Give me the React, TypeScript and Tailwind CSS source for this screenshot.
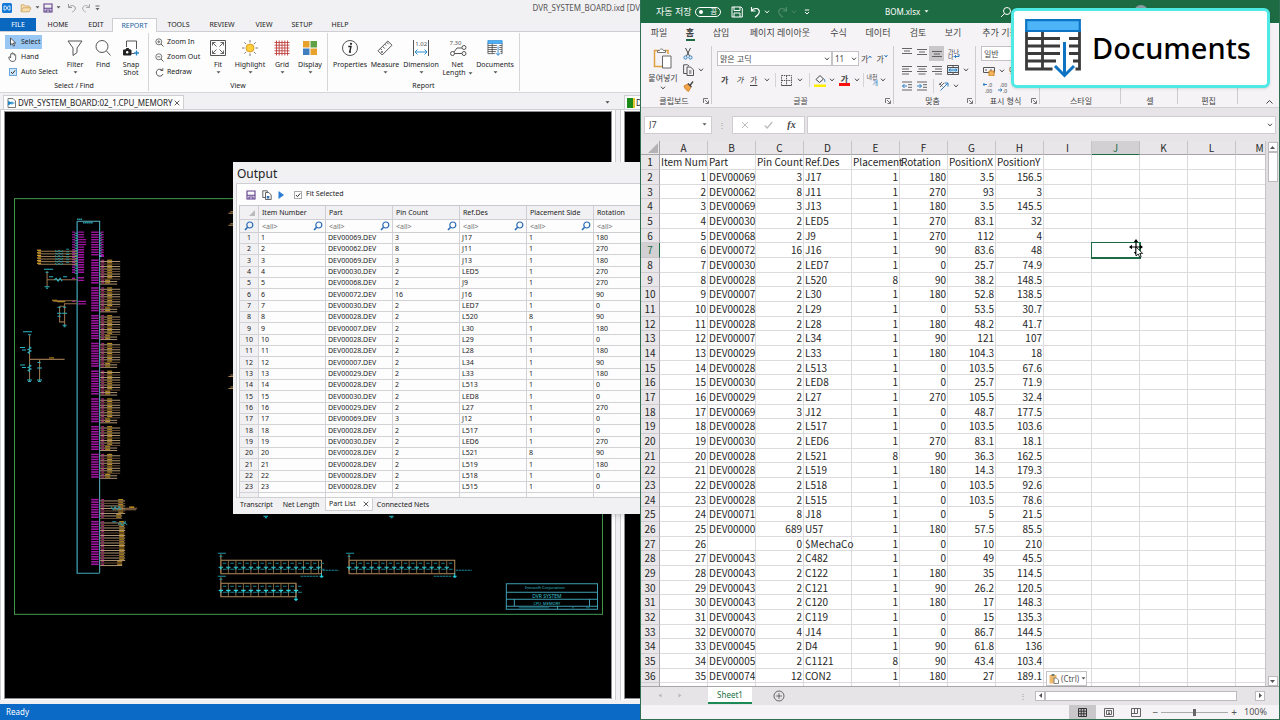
import type { ReactNode } from "react";

type Part = [string, string, string, string, string, string, string];

// part, pin count, ref.des, placement side, rotation, x, y
const PARTS: Part[] = [
  ["DEV00069", "3", "J17", "1", "180", "3.5", "156.5"],
  ["DEV00062", "8", "J11", "1", "270", "93", "3"],
  ["DEV00069", "3", "J13", "1", "180", "3.5", "145.5"],
  ["DEV00030", "2", "LED5", "1", "270", "83.1", "32"],
  ["DEV00068", "2", "J9", "1", "270", "112", "4"],
  ["DEV00072", "16", "J16", "1", "90", "83.6", "48"],
  ["DEV00030", "2", "LED7", "1", "0", "25.7", "74.9"],
  ["DEV00028", "2", "L520", "8", "90", "38.2", "148.5"],
  ["DEV00007", "2", "L30", "1", "180", "52.8", "138.5"],
  ["DEV00028", "2", "L29", "1", "0", "53.5", "30.7"],
  ["DEV00028", "2", "L28", "1", "180", "48.2", "41.7"],
  ["DEV00007", "2", "L34", "1", "90", "121", "107"],
  ["DEV00029", "2", "L33", "1", "180", "104.3", "18"],
  ["DEV00028", "2", "L513", "1", "0", "103.5", "67.6"],
  ["DEV00030", "2", "LED8", "1", "0", "25.7", "71.9"],
  ["DEV00029", "2", "L27", "1", "270", "105.5", "32.4"],
  ["DEV00069", "3", "J12", "1", "0", "48.7", "177.5"],
  ["DEV00028", "2", "L517", "1", "0", "103.5", "103.6"],
  ["DEV00030", "2", "LED6", "1", "270", "83.1", "18.1"],
  ["DEV00028", "2", "L521", "8", "90", "36.3", "162.5"],
  ["DEV00028", "2", "L519", "1", "180", "14.3", "179.3"],
  ["DEV00028", "2", "L518", "1", "0", "103.5", "92.6"],
  ["DEV00028", "2", "L515", "1", "0", "103.5", "78.6"],
  ["DEV00071", "8", "J18", "1", "0", "5", "21.5"],
  ["DEV00000", "689", "U57", "1", "180", "57.5", "85.5"],
  ["", "0", "$MechaCo", "1", "0", "10", "210"],
  ["DEV00043", "2", "C482", "1", "0", "49", "45.5"],
  ["DEV00043", "2", "C122", "1", "180", "35", "114.5"],
  ["DEV00043", "2", "C121", "1", "90", "26.2", "120.5"],
  ["DEV00043", "2", "C120", "1", "180", "17", "148.3"],
  ["DEV00043", "2", "C119", "1", "0", "15", "135.3"],
  ["DEV00070", "4", "J14", "1", "0", "86.7", "144.5"],
  ["DEV00045", "2", "D4", "1", "90", "61.8", "136"],
  ["DEV00005", "2", "C1121", "8", "90", "43.4", "103.4"],
  ["DEV00074", "12", "CON2", "1", "180", "27", "189.1"],
];

const SHEET_HEADERS = ["Item Num", "Part", "Pin Count", "Ref.Des", "Placement", "Rotation", "PositionX", "PositionY"];
const COLUMNS = ["A", "B", "C", "D", "E", "F", "G", "H", "I", "J", "K", "L", "M"];
const OUTPUT_COLUMNS = ["Item Number", "Part", "Pin Count", "Ref.Des", "Placement Side", "Rotation"];

/* ---------- shared bits ---------- */

function Icon({ box, className, children }: { box: string; className: string; children: ReactNode }) {
  return (
    <svg viewBox={box} className={`shrink-0 ${className}`} fill="none" stroke="currentColor" aria-hidden="true">
      {children}
    </svg>
  );
}

function Caret({ className = "text-[#555]" }: { className?: string }) {
  return (
    <Icon box="0 0 5 3" className={`h-[3px] w-[5px] ${className}`}>
      <path d="M0.5 0.3h4L2.5 2.6z" fill="currentColor" stroke="none" />
    </Icon>
  );
}

function Chevron({ className = "text-[#444]" }: { className?: string }) {
  return (
    <Icon box="0 0 6 4" className={`h-1 w-1.5 ${className}`}>
      <path d="M1 0.7l2 2.2 2-2.2" />
    </Icon>
  );
}

function Launcher() {
  return (
    <Icon box="0 0 6 6" className="size-1.5 text-[#555]">
      <path d="M0.5 5V0.5H5M2 2l3 3M5.5 2.5v3h-3" strokeWidth="0.8" />
    </Icon>
  );
}

function Tick({ id, label, blue }: { id: string; label: string; blue?: boolean }) {
  return (
    <label htmlFor={id} className="flex items-center gap-1 whitespace-nowrap">
      <span className="grid size-2 place-items-center">
        <input
          id={id}
          type="checkbox"
          defaultChecked
          className={`col-start-1 row-start-1 size-2 appearance-none border ${blue ? "border-[#6aa7dd] bg-[#cfe5fa]" : "border-[#aaa] bg-white"}`}
        />
        <Icon box="0 0 8 8" className="pointer-events-none col-start-1 row-start-1 size-2 text-[#333]">
          <path d="M2 4l1.5 1.7L6.2 2.4" />
        </Icon>
      </span>
      {label}
    </label>
  );
}

/* ---------- board viewer ---------- */

const saveIcon = (
  <Icon box="0 0 10 10" className="size-2.5 text-[#5d3c87]">
    <path d="M1 1h8v8H1zM1 5.2h8M3 9V7h4v2" strokeWidth="1.1" />
  </Icon>
);

function QuickAccess() {
  return (
    <header className="flex h-[15px] items-center pl-0.5">
      <Icon box="0 0 10 10" className="mr-2 size-2.5">
        <rect width="10" height="10" rx="1.5" fill="#1479d8" stroke="none" />
        <path d="M2 3v4h1.5L5 5l1.5 2H8V3H6.5L5 5 3.5 3z" stroke="#fff" strokeWidth="0.8" />
      </Icon>
      <button aria-label="Open" className="mr-[3px]">
        <Icon box="0 0 12 10" className="h-2.5 w-3">
          <path d="M1.2 8.8V1.8h3l1 1.2h4v2M1.2 8.8l1.8-4h8l-1.8 4z" stroke="#d2a869" fill="#f8dfae" strokeWidth="0.9" />
        </Icon>
      </button>
      <Caret />
      <button aria-label="Save" className="mx-[3px]">{saveIcon}</button>
      <Caret />
      <button aria-label="Undo" className="ml-1.5">
        <Icon box="0 0 10 10" className="size-2.5 text-[#999]">
          <path d="M1.5 1v3.5H5M1.7 4.3C3.3 2 7.8 1.8 8.3 5c.2 2-1.3 3.3-3 4" />
        </Icon>
      </button>
      <button aria-label="Redo" className="mx-1">
        <Icon box="0 0 10 10" className="size-2.5 text-[#aaa]">
          <path d="M8.5 1v3.5H5M8.3 4.3C6.7 2 2.2 1.8 1.7 5c-.2 2 1.3 3.3 3 4" />
        </Icon>
      </button>
      <Icon box="0 0 5 6" className="h-1.5 w-[5px] text-[#666]">
        <path d="M0.5 1h4" />
        <path d="M0.5 3h4L2.5 5.4z" fill="currentColor" stroke="none" />
      </Icon>
      <h1 className="flex-1 text-right text-[8px] leading-[15px] whitespace-nowrap text-[#555]">
        DVR_SYSTEM_BOARD.ixd [DV
      </h1>
    </header>
  );
}

function MenuTabs() {
  return (
    <nav className="flex h-3.5 items-stretch border-b border-[#cfced2] text-[7px] leading-3 text-[#222]">
      <button className="w-9 bg-[#0a67bf] text-white">FILE</button>
      <button className="w-11">HOME</button>
      <button className="w-8">EDIT</button>
      <button className="-mb-px w-[45px] border border-b-0 border-[#cfced2] bg-[#fdfdfe] text-[#1c5f9e]">REPORT</button>
      <button className="w-[43px]">TOOLS</button>
      <button className="w-11">REVIEW</button>
      <button className="w-10">VIEW</button>
      <button className="w-9">SETUP</button>
      <button className="w-10">HELP</button>
    </nav>
  );
}

function BigButton({ icon, label, width, caret, tail }: { icon: ReactNode; label: string; width: string; caret?: boolean; tail?: string }) {
  return (
    <button className={`flex flex-col items-center ${width}`}>
      <span className="flex h-[25px] items-center">{icon}</span>
      <span className="leading-[9px] whitespace-nowrap">{label}</span>
      {tail && (
        <span className="flex items-center gap-0.5 leading-[8px]">
          {tail}
          {caret && <Caret />}
        </span>
      )}
      {!tail && caret && <span className="pt-0.5"><Caret /></span>}
    </button>
  );
}

function BoardGroup({ label, width, children }: { label: string; width: string; children: ReactNode }) {
  return (
    <section className={`my-px flex flex-col border-r border-[#d5d4d8] ${width}`}>
      <div className="flex h-[47px] items-start pt-0.5">{children}</div>
      <h2 className="text-center leading-[11px]">{label}</h2>
    </section>
  );
}

const big = "size-[18px] text-[#555]";

function BoardRibbon() {
  return (
    <div className="flex h-[61px] border-b border-[#d5d4d8] bg-[#fdfdfe] text-[7px] text-[#222]">
      <BoardGroup label="Select / Find" width="w-[149px]">
        <div className="flex w-[61px] flex-col gap-px pl-[5px]">
          <button className="flex h-3.5 w-[37px] items-center gap-1 bg-[#99c7f3] pl-1">
            <Icon box="0 0 8 10" className="h-2.5 w-2 text-[#333]">
              <path d="M1.5 1v7l1.7-1.6 1.3 2.8 1.1-.5-1.2-2.7h2.3z" fill="#fff" strokeWidth="0.8" />
            </Icon>
            Select
          </button>
          <button className="flex h-3.5 items-center gap-1 pl-[3px]">
            <Icon box="0 0 9 10" className="h-2.5 w-[9px] text-[#444]">
              <path d="M2.6 6V2.3c0-1 1.3-1 1.3 0V1.5c0-1 1.3-1 1.3 0v.8c0-1 1.3-1 1.3 0v1c0-.9 1.2-.9 1.2 0V7c0 3-5 3.2-6.2.8L.8 5.6c-.4-.9.7-1.2 1.1-.5z" strokeWidth="0.8" />
            </Icon>
            Hand
          </button>
          <div className="flex h-3.5 items-center pl-1">
            <Tick id="auto-select" label="Auto Select" blue />
          </div>
        </div>
        <BigButton width="w-7" label="Filter" caret icon={<Icon box="0 0 18 18" className={big}><path d="M2 2h14l-5 7v4.5l-4 3V9z" /></Icon>} />
        <BigButton width="w-7" label="Find" icon={<Icon box="0 0 18 18" className={big}><circle cx="8" cy="7.5" r="6" /><path d="M12.5 12l4 4.5" /></Icon>} />
        <BigButton
          width="w-7"
          label="Snap"
          tail="Shot"
          icon={
            <Icon box="0 0 18 18" className={big}>
              <path d="M4.5 8V2h10v8M9.5 14.5h3" />
              <path d="M1.5 11h2l1-1.5h2L7.5 11H9v5H1.5z" fill="#222" stroke="#222" />
              <circle cx="5.2" cy="13.3" r="1.2" fill="#fff" stroke="none" />
              <path d="M14.5 11.5v5M12 14h5" stroke="#2587c8" strokeWidth="1.3" />
            </Icon>
          }
        />
      </BoardGroup>
      <BoardGroup label="View" width="w-[179px]">
        <div className="flex w-[55px] flex-col gap-px pl-1.5">
          {["Zoom In", "Zoom Out", "Redraw"].map((label, i) => (
            <button key={label} className="flex h-3.5 items-center gap-[3px] whitespace-nowrap">
              <Icon box="0 0 9 9" className="size-[9px] text-[#555]">
                {i < 2 ? <path d="M6 6l2.5 2.5" /> : <path d="M7.5 2.5A3.5 3.5 0 1 0 8 6M5.5 2.5h2.3V.3" />}
                {i < 2 && <circle cx="3.8" cy="3.8" r="3" strokeWidth="0.8" />}
                {i < 2 && <path d={i === 0 ? "M2.3 3.8h3M3.8 2.3v3" : "M2.3 3.8h3"} strokeWidth="0.8" />}
              </Icon>
              {label}
            </button>
          ))}
        </div>
        <BigButton
          width="w-7"
          label="Fit"
          caret
          icon={
            <Icon box="0 0 18 18" className={big}>
              <path d="M1.5 1.5h15v15h-15z" />
              <path d="M7.5 7.5l-4-4M3.5 6.5v-3h3M10.5 7.5l4-4M11.5 3.5h3v3M7.5 10.5l-4 4M3.5 11.5v3h3M10.5 10.5l4 4M14.5 11.5v3h-3" strokeWidth="0.9" />
            </Icon>
          }
        />
        <BigButton
          width="w-9"
          label="Highlight"
          caret
          icon={
            <Icon box="0 0 18 18" className={big}>
              <path d="M9 1v2.5M9 14.5V17M1 9h2.5M14.5 9H17M3.3 3.3l1.8 1.8M12.9 12.9l1.8 1.8M14.7 3.3l-1.8 1.8M5.1 12.9l-1.8 1.8" stroke="#777" />
              <circle cx="9" cy="9" r="4" fill="#ffcf3d" stroke="#dfa025" />
            </Icon>
          }
        />
        <BigButton
          width="w-7"
          label="Grid"
          caret
          icon={
            <Icon box="0 0 18 18" className={big}>
              <path d="M3.5 1.5v15M6.2 1.5v15M9 1.5v15M11.8 1.5v15M14.5 1.5v15M1.5 3.5h15M1.5 6.2h15M1.5 9h15M1.5 11.8h15M1.5 14.5h15" stroke="#c0433f" strokeWidth="0.9" />
            </Icon>
          }
        />
        <BigButton
          width="w-7"
          label="Display"
          caret
          icon={
            <Icon box="0 0 18 18" className={big}>
              <g stroke="none">
                <path d="M2 2h6.5v6.5H2z" fill="#e8a22c" />
                <path d="M9.5 2H16v6.5H9.5z" fill="#5fa144" />
                <path d="M2 9.5h6.5V16H2z" fill="#3f7fbf" />
                <path d="M9.5 9.5H16V16H9.5z" fill="#e8a22c" />
              </g>
            </Icon>
          }
        />
      </BoardGroup>
      <BoardGroup label="Report" width="w-[192px]">
        <span className="w-0.5" />
        <BigButton
          width="w-10"
          label="Properties"
          icon={
            <Icon box="0 0 18 18" className={big}>
              <circle cx="9" cy="9" r="7.5" />
              <path d="M8 7.5h2L8.7 13H10M7.3 7.5h1" stroke="#222" strokeWidth="1.4" />
              <circle cx="10" cy="4.8" r="1.1" fill="#222" stroke="none" />
            </Icon>
          }
        />
        <BigButton
          width="w-[30px]"
          label="Measure"
          caret
          icon={
            <Icon box="0 0 18 18" className={big}>
              <path d="M2 11.8L11.8 2 16 6.2 6.2 16zM4.3 9.5l1.5 1.5M6.5 7.3l2.2 2.2M8.7 5.1l1.5 1.5M10.6 3.2l2 2" />
              <circle cx="6" cy="13" r="0.6" />
            </Icon>
          }
        />
        <BigButton
          width="w-[42px]"
          label="Dimension"
          caret
          icon={
            <Icon box="0 0 18 18" className={big}>
              <path d="M1.5 1v16M16.5 1v16" />
              <path d="M3 13h12M5.5 10.5L3 13l2.5 2.5M12.5 10.5L15 13l-2.5 2.5" stroke="#2d8fcb" />
              <text x="3.3" y="6.5" fontSize="6" fill="currentColor" stroke="none">1.02</text>
            </Icon>
          }
        />
        <BigButton
          width="w-[31px]"
          label="Net"
          tail="Length"
          caret
          icon={
            <Icon box="0 0 18 18" className={big}>
              <text x="0.5" y="6" fontSize="6" fill="currentColor" stroke="none">7.30</text>
              <circle cx="15" cy="8.5" r="2" />
              <circle cx="3.5" cy="14.5" r="2" />
              <circle cx="15" cy="14.5" r="2" />
              <path d="M5.5 14.5H13M5 13l3-4h5" />
            </Icon>
          }
        />
        <BigButton width="w-11" label="Documents" caret icon={<DocumentsIcon className="size-4" />} />
      </BoardGroup>
    </div>
  );
}

function DocumentsIcon({ className }: { className: string }) {
  return (
    <Icon box="0 0 58 60" className={className}>
      <path d="M2.5 12v39h26M55.5 12v39h-4M3 20.5h33M45 20.5h10M3 28h33M45 28h10M3 35.5h33M45 35.5h10M3 43h29M49 43h6M18.5 12v39" stroke="#3b3b3b" strokeWidth="2.8" />
      <path d="M2.2 2.2h53.6V13H2.2z" fill="#4db4f8" stroke="#0d74c4" strokeWidth="2.2" />
      <path d="M40.5 24v33M31 48l9.5 9.5L50 48" stroke="#0d74c4" strokeWidth="3" />
    </Icon>
  );
}

function DocTabs() {
  return (
    <div className="flex h-4 items-end pl-[3px] text-[8px] text-[#222]">
      <div className="flex h-3.5 w-[181px] items-center border border-b-0 border-[#cfced2] bg-[#fdfdfe] pl-[3px]">
        <Icon box="0 0 9 10" className="mr-0.5 h-2.5 w-[9px]">
          <path d="M1 .5h5l2.5 2.5v6.5H1z" fill="#fff" stroke="#555" strokeWidth="0.8" />
          <path d="M1.5 3.5l3 1.5-3 1.8zM4.5 5h3M5 3.5v3" stroke="#1c86c7" fill="#1c86c7" />
        </Icon>
        <span className="flex-1 leading-3 whitespace-nowrap">DVR_SYSTEM_BOARD:02_1.CPU_MEMORY</span>
        <button aria-label="Close tab" className="mr-[3px]">
          <Icon box="0 0 6 6" className="size-1.5 text-[#333]"><path d="M.7.7l4.6 4.6M5.3.7L.7 5.3" strokeWidth="0.8" /></Icon>
        </button>
      </div>
      <div className="flex h-3.5 flex-1 items-center justify-end pr-3.5"><Caret className="text-[#444]" /></div>
      <div className="flex h-3.5 w-4 items-center gap-px overflow-hidden border border-r-0 border-b-0 border-[#cfced2] bg-[#fdfdfe] pl-0.5">
        <span className="h-2.5 w-2 shrink-0 border-r-2 border-[#e3c62b] bg-[#1b8a1b]" />
        <span>D</span>
      </div>
    </div>
  );
}

const steps = (from: number, to: number, by: number) => {
  const out: number[] = [];
  for (let v = from; v < to; v += by) out.push(v);
  return out;
};

// One run of pins on the right edge of the CPU symbol
function PinBlock({ y, rows, wire, label }: { y: number; rows: number; wire: number; label: number }) {
  return (
    <g>
      {steps(0, rows, 1).map((r) => {
        const py = y + r * 2.5;
        return (
          <g key={r}>
            <path d={`M91 ${py}h7.5`} stroke="#a015a0" strokeWidth="1.6" />
            <path d={`M100 ${py + 1.3}h${r > rows - 3 ? wire - 3 : wire}`} stroke={r % 3 === 1 ? "#735740" : "#c4a680"} strokeWidth="0.9" />
            <path d={`M101 ${py}h3`} stroke="#9a2a6d" strokeWidth="1.3" />
            <path d={`M${r > rows - 3 ? label - 2 : label} ${py}h5`} stroke="#b98c22" strokeWidth="1.2" />
          </g>
        );
      })}
    </g>
  );
}

function CapBank({ x, y, count, width }: { x: number; y: number; count: number; width: number }) {
  return (
    <g>
      <path d={`M${x} ${y - 6}v19.5H${x + width}V${y}H${x}`} stroke="#b28d5e" />
      <path d={`M${x - 3} ${y - 7}h8M${x - 1.5} ${y - 4}h3`} stroke="#1e98a8" />
      {steps(0, count, 1).map((i) => (
        <g key={i}>
          <path d={`M${x + i * 7.5} ${y}v13`} stroke="#9c7a50" strokeWidth="0.8" />
          <path d={`M${x + i * 7.5 - 2.2} ${y + 7}h4.4M${x + i * 7.5 - 1} ${y + 8.5}h2`} stroke="#25d5e2" strokeWidth="1.2" />
          <path d={`M${x + i * 7.5 + 2} ${y + 3}h3.5M${x + i * 7.5 + 2} ${y + 9}h4`} stroke="#1d7f8d" />
        </g>
      ))}
      <path d={`M${x + width} ${y + 13}v3M${x + width - 2} ${y + 16}h4M${x + width - 1} ${y + 17}h2`} stroke="#25d5e2" />
    </g>
  );
}

function Schematic() {
  return (
    <svg viewBox="5 112 605 580" preserveAspectRatio="xMinYMin meet" className="block size-full" fill="none" role="img" aria-label="CPU memory schematic">
      <rect x="14.5" y="198.5" width="587" height="415" stroke="#3f9a4b" />
      <path d="M77 221v351.5h22.5" stroke="#3fa9ba" strokeWidth="1.2" />
      <path d="M77 221h22.5V572" stroke="#55b7c4" strokeWidth="1" />
      <path d="M77 219h5M83 222.5h10" stroke="#2aa3b4" strokeWidth="1.4" strokeDasharray="1.5 .5" />
      {steps(232, 274, 2.5).map((y) => (
        <g key={y}>
          <path d={`M72 ${y}h3M78 ${y}h${y > 239 && y < 247 ? 8 : 6}M100.5 ${y > 256 ? 256 : y}h3`} stroke="#a015a0" strokeWidth="1.3" />
          <path d={`M74.5 ${y + 1}h3M99.5 ${y > 256 ? 256 : y + 1}h2`} stroke="#4fc3cf" strokeWidth="0.8" />
        </g>
      ))}
      {steps(232, 257, 2.5).map((y) => <path key={y} d={`M91 ${y}h7.5`} stroke="#a015a0" strokeWidth="1.4" />)}
      <path d="M78 277.5h6M78 280h6M72 278h3M78 301h8M78 303.5h8M72 301h3" stroke="#a015a0" strokeWidth="1.3" />
      {/* bus feeding the upper left pins */}
      {steps(250, 265, 2.6).map((y) => (
        <g key={y}>
          <path d={`M38 ${y + 1}h39`} stroke="#b28d5e" strokeWidth="0.9" />
          <path d={`M37 ${y}h4`} stroke="#d6a021" strokeWidth="1.3" />
          <path d={`M55 ${y}l2 1.5 2-1.5 2 1.5 2-1.5M66 ${y - 1}h3`} stroke="#2597a4" strokeWidth="0.9" />
        </g>
      ))}
      <path d="M47 271v15M47 279.5h30M65 301h-12M55 300.5h22M64.5 303v23M64.5 303.5H77M59.5 306v15.5h5M59.5 306h5" stroke="#94704c" strokeWidth="1.1" />
      <path d="M52 300h5M57 301.5h8" stroke="#c2921d" />
      <path d="M44 269h9M45.5 272h3M44.5 286.5h5M46 288h2M54 279.5l2-1.5 2 3 2-3 2 3M49 276.5h4M63 276.5h4M57 313h4.5M62 313h5M57.5 307h3M63 307h3M57.5 316h3M62.5 325h4M63.5 326.5h2" stroke="#2ab7c5" />
      <path d="M29.5 335v46M29.5 359h35M39.5 359v22" stroke="#94704c" strokeWidth="1.1" />
      <path d="M49 357.5h5" stroke="#c2921d" />
      <path d="M23 331.5h9M28 334.5h3M20 347h5M22 349.5h4M20 364.5h5M22 367h4M29 346l2 1.5-3 1.5 3 1.5-3 1.5 2 1.5M29 364l2 1.5-3 1.5 3 1.5-3 1.5 2 1.5M37 367.5h5M37.5 362h3M27 379.5h5M28 381h3M37 379.5h5M38 381h3" stroke="#2ab7c5" />
      {steps(0, 8, 1).map((b) => <PinBlock key={b} y={260 + b * 27.7} rows={10} wire={20} label={107} />)}
      <PinBlock y={499} rows={8} wire={25} label={118} />
      <PinBlock y={521} rows={18} wire={25} label={119} />
      <path d="M113 507.5h24M113 509h23" stroke="#94704c" />
      <path d="M129 506.5h5" stroke="#c2921d" strokeWidth="1.5" />
      <path d="M111 506l2 3 2-3 2 3 2-3 2 3M112 521h4M125 520v3M118 524l2-2 2 3 2-3 3 2" stroke="#2597a4" />
      {[213, 225, 376, 388].map((y) => <path key={y} d={`M228 ${y}h5M230 ${y - 1.5}h3`} stroke="#a88250" />)}
      <path d="M263 515.5h4.5M264.5 517h2M388.5 515.5h4.5M390 517h2" stroke="#25d5e2" />
      <CapBank x={220.5} y={559.5} count={14} width={100.5} />
      <CapBank x={348.5} y={559.5} count={14} width={105.5} />
      <CapBank x={220.5} y={582.5} count={11} width={75} />
      <path d="M322 569.5h16M300 575.5h18M455 569.5h16M433 575.5h18" stroke="#168392" strokeDasharray="2.5 .5" />
      <g stroke="#3fa0b4">
        <path d="M505.5 583h91v25.5h-91zM505.5 591.5h91M505.5 598.5h91M505.5 605.5h91M513.5 598.5v7M588.5 598.5v7M556.5 605.5v3" />
        <path d="M518 607h30M571 607h2M585 607h4" strokeWidth="0.8" stroke="#168392" />
      </g>
      <g fill="#36c3cf" textAnchor="middle">
        <text x="544" y="588.5" fontSize="4">Innosoft Corporation</text>
        <text x="546" y="597" fontSize="5">DVR SYSTEM</text>
        <text x="546" y="604" fontSize="4">CPU_MEMORY</text>
      </g>
    </svg>
  );
}

function SearchMark({ className }: { className: string }) {
  return (
    <Icon box="0 0 10 10" className={`size-2.5 text-[#2c6db5] ${className}`}>
      <circle cx="5.8" cy="4" r="3" strokeWidth="1.2" />
      <path d="M3.6 6.2L1 9" strokeWidth="1.6" />
    </Icon>
  );
}

function OutputTable() {
  return (
    <table className="w-[421px] table-fixed border-separate border-spacing-0 border-t border-l border-[#c9c8cc] text-left text-[7px] text-[#222]">
      <colgroup>
        <col className="w-[19px]" />
        {OUTPUT_COLUMNS.map((c) => <col key={c} className="w-[67px]" />)}
      </colgroup>
      <thead>
        <tr className="h-3.5 bg-[#f1f0f3]">
          <th className="border-r border-b border-[#cfced2] p-0">
            <Icon box="0 0 8 8" className="ml-2 size-2"><path d="M7 1v6H1z" fill="#bbb" stroke="none" /></Icon>
          </th>
          {OUTPUT_COLUMNS.map((c) => (
            <th key={c} scope="col" className="border-r border-b border-[#cfced2] p-0 pl-[3px] leading-3 font-normal">{c}</th>
          ))}
        </tr>
        <tr className="h-[13px]">
          <td className="border-r border-b border-[#cfced2] bg-[#f1f0f3] p-0"><SearchMark className="ml-1" /></td>
          {OUTPUT_COLUMNS.map((c) => (
            <td key={c} className="border-r border-b border-[#cfced2] p-0">
              <div className="flex items-center">
                <input aria-label={`Filter ${c}`} placeholder="<all>" className="h-3 w-12 flex-1 pl-[3px] placeholder:text-[#777]" />
                <SearchMark className="mr-0.5" />
              </div>
            </td>
          ))}
        </tr>
      </thead>
      <tbody>
        {PARTS.slice(0, 23).map((p, i) => (
          <tr key={i} className={i % 3 === 2 ? "h-3" : "h-[11px]"}>
            <th scope="row" className="border-r border-b border-[#d3d2d6] bg-[#f1f0f3] p-0 text-center leading-[10px] font-normal">{i + 1}</th>
            {[String(i + 1), `${p[0]}.DEV`, p[1], p[2], p[3], p[4]].map((v, c) => (
              <td key={c} className="border-r border-b border-[#d3d2d6] p-0 pl-0.5 leading-[10px]">{v}</td>
            ))}
          </tr>
        ))}
        <tr className="h-[11px]">
          <th className="border-r border-[#d3d2d6] bg-[#f1f0f3] p-0" />
          {OUTPUT_COLUMNS.map((c) => <td key={c} className="border-r border-[#d3d2d6] p-0" />)}
        </tr>
      </tbody>
    </table>
  );
}

function OutputWindow() {
  return (
    <section className="absolute top-[162px] right-0 left-[233px] flex h-[352px] flex-col bg-[#f1f0f3] pl-[3px] text-[7px] text-[#222] shadow-md">
      <h2 className="h-[21px] pl-px text-xs leading-6">Output</h2>
      <div className="flex h-[315px] flex-col overflow-hidden border border-r-0 border-[#cfced2] bg-[#fdfdfe] pl-0.5">
        <div className="flex h-[21px] shrink-0 items-center gap-1.5 pl-[7px]">
          <button aria-label="Save">{saveIcon}</button>
          <button aria-label="Copy">
            <Icon box="0 0 10 10" className="size-2.5 text-[#555]">
              <path d="M3 7.5H.8V.8h4.5V2M3.5 2.5h3.3L9.2 5v4.5H3.5z" strokeWidth="0.9" />
              <path d="M4.8 6h2.5v2.5H4.8z" fill="#2c6db5" stroke="none" />
            </Icon>
          </button>
          <button aria-label="Run" className="mr-1">
            <Icon box="0 0 6 8" className="h-2 w-1.5"><path d="M.5 0L6 4 .5 8z" fill="#2b7cd3" stroke="none" /></Icon>
          </button>
          <Tick id="fit-selected" label="Fit Selected" />
        </div>
        <div className="overflow-hidden"><OutputTable /></div>
      </div>
      <div className="flex h-[13px] items-stretch leading-3" role="tablist">
        <button role="tab" className="w-[41px]">Transcript</button>
        <button role="tab" className="w-12">Net Length</button>
        <button role="tab" aria-selected className="flex w-12 items-center justify-between border border-t-0 border-[#cfced2] bg-[#fdfdfe] px-[3px]">
          Part List
          <Icon box="0 0 6 6" className="size-1.5 text-[#333]"><path d="M.7.7l4.6 4.6M5.3.7L.7 5.3" strokeWidth="0.8" /></Icon>
        </button>
        <button role="tab" className="w-[60px]">Connected Nets</button>
      </div>
    </section>
  );
}

function BoardViewer() {
  return (
    <div className="relative flex w-1/2 flex-col overflow-hidden bg-[#f1f0f3]">
      <QuickAccess />
      <div className="h-[3px]" />
      <MenuTabs />
      <BoardRibbon />
      <DocTabs />
      <main className="flex min-h-0 flex-1 border-t border-[#cfced2] pb-1">
        <div className="flex flex-1 border-x border-[#cfced2] bg-white px-[3px] py-px">
          <div className="flex-1 border border-[#8d8c90] bg-black"><Schematic /></div>
        </div>
        <div className="ml-1 w-5 border-l border-[#cfced2] bg-white py-px pl-[3px]">
          <div className="h-full border border-r-0 border-[#8d8c90] bg-black" />
        </div>
      </main>
      <footer className="h-4 bg-[#0a6ac6] pl-1.5 text-[8px] leading-4 text-white">Ready</footer>
      <OutputWindow />
    </div>
  );
}

/* ---------- spreadsheet ---------- */

function SheetTitle() {
  return (
    <header className="flex h-[23px] shrink-0 items-center bg-[#1d6b43] pl-[15px] text-[9px] text-white">
      <label htmlFor="autosave" className="w-[39px] whitespace-nowrap">자동 저장</label>
      <span className="grid h-2.5 w-[26px] items-center">
        <input id="autosave" type="checkbox" className="col-start-1 row-start-1 h-2.5 w-[26px] appearance-none rounded-full border border-white" />
        <span className="pointer-events-none col-start-1 row-start-1 flex items-center justify-between px-1 text-[7px] leading-[8px]">
          <span className="size-1 rounded-full bg-white" />끔
        </span>
      </span>
      <button aria-label="저장" className="ml-2.5">
        <Icon box="0 0 12 12" className="size-3"><path d="M1 1h9l1.3 1.3V11H1zM3 1v3.5h6V1M3 11V7h6v4" /></Icon>
      </button>
      <button aria-label="실행 취소" className="ml-[7px] flex items-center gap-[3px]">
        <Icon box="0 0 11 12" className="h-3 w-[11px]"><path d="M1.5 1v4h4M1.8 4.7C4 1.5 9 1.8 9.3 5.5 9.4 8 7.5 9.5 5 11.3" strokeWidth="1.2" /></Icon>
        <Chevron className="text-white" />
      </button>
      <button aria-label="다시 실행" className="ml-[7px] flex items-center gap-[3px] text-[#4d8b6b]">
        <Icon box="0 0 11 12" className="h-3 w-[11px]"><path d="M9.5 1v4h-4M9.2 4.7C7 1.5 2 1.8 1.7 5.5 1.6 8 3.5 9.5 6 11.3" strokeWidth="1.2" /></Icon>
        <Chevron className="text-[#4d8b6b]" />
      </button>
      <Icon box="0 0 6 6" className="ml-[7px] size-1.5"><path d="M.8 1h4.4M1 3l2 2 2-2" /></Icon>
      <div className="flex flex-1 items-center gap-1 pl-[75px] text-[8px]">
        BOM.xlsx
        <Caret className="text-white" />
      </div>
      <Icon box="0 0 12 12" className="mr-[122px] size-3"><circle cx="7" cy="5" r="3.5" /><path d="M4.5 7.5L1 11" /></Icon>
      <span className="mr-[131px] size-3.5 rounded-full bg-[#8f9aa0]" />
    </header>
  );
}

function SheetMenu() {
  return (
    <nav className="flex h-5 shrink-0 items-center text-[9px] whitespace-nowrap text-[#444]">
      <button className="w-9">파일</button>
      <button className="flex w-[26px] flex-col items-center pt-0.5 leading-3 font-bold">
        홈
        <span className="h-0.5 w-[9px] bg-[#1d6b43]" />
      </button>
      <button className="w-9">삽입</button>
      <button className="w-[82px]">페이지 레이아웃</button>
      <button className="w-[35px]">수식</button>
      <button className="w-11">데이터</button>
      <button className="w-9">검토</button>
      <button className="w-[34px]">보기</button>
      <button className="w-[60px]">추가 기능</button>
    </nav>
  );
}

function SheetGroup({ label, width, launcher, children }: { label: string; width: string; launcher?: boolean; children?: ReactNode }) {
  return (
    <section className={`flex flex-col ${width}`}>
      <div className="flex-1">{children}</div>
      <div className="flex h-3 items-center pr-0.5">
        <h2 className="flex-1 pl-1 text-center">{label}</h2>
        {launcher && <Launcher />}
      </div>
    </section>
  );
}

function Rule() {
  return <span className="my-[3px] w-px shrink-0 bg-[#cdcbce]" />;
}

function Lines({ widths, indent }: { widths: number[]; indent: "left" | "center" | "right" }) {
  return (
    <Icon box="0 0 10 10" className="size-2.5 text-[#555]">
      {widths.map((w, i) => {
        const x = indent === "left" ? 0 : indent === "right" ? 10 - w : (10 - w) / 2;
        return <path key={i} d={`M${x} ${1.5 + i * 2.5}h${w}`} strokeWidth="0.9" />;
      })}
    </Icon>
  );
}

const vline = <span className="mx-1 h-3.5 w-px bg-[#d5d3d6]" />;

function FontGroup() {
  return (
    <div className="flex flex-col gap-[7px] pt-2 pl-[5px]">
      <div className="flex items-center">
        <span className="grid h-[15px] w-[115px] items-center">
          <select aria-label="글꼴" className="col-start-1 row-start-1 h-full appearance-none border border-[#c4c2c5] bg-white pl-0.5">
            <option>맑은 고딕</option>
          </select>
          <span className="pointer-events-none col-start-1 row-start-1 justify-self-end pr-0.5"><Chevron /></span>
        </span>
        <span className="grid h-[15px] w-[27px] items-center">
          <select aria-label="글꼴 크기" className="col-start-1 row-start-1 h-full appearance-none border border-[#c4c2c5] bg-white pl-0.5">
            <option>11</option>
          </select>
          <span className="pointer-events-none col-start-1 row-start-1 justify-self-end pr-0.5"><Chevron /></span>
        </span>
        <button aria-label="글꼴 크게" className="ml-0.5 flex items-start">
          가
          <Icon box="0 0 4 4" className="mt-0.5 size-1 text-[#2b7cc0]"><path d="M.5 3L2 1l1.5 2" /></Icon>
        </button>
        <button aria-label="글꼴 작게" className="ml-1 flex items-start text-[8px]">
          가
          <Icon box="0 0 4 4" className="mt-px size-1 text-[#2b7cc0]"><path d="M.5 1L2 3l1.5-2" /></Icon>
        </button>
      </div>
      <div className="flex h-3.5 items-center pl-1">
        <button className="w-[15px] text-left font-bold">가</button>
        <button className="w-3.5 text-left italic">가</button>
        <button className="w-3.5 text-left underline underline-offset-2">가</button>
        <Chevron />
        <span className="mx-[5px] h-3.5 w-px bg-[#d5d3d6]" />
        <button aria-label="테두리" className="mr-[5px]">
          <Icon box="0 0 11 11" className="size-[11px] text-[#555]"><path d="M.5.5h10v10H.5zM5.5.5v10M.5 5.5h10" strokeDasharray="1.5 .8" /><path d="M.5 10.5h10" /></Icon>
        </button>
        <Chevron />
        <span className="ml-1.5 h-3.5 w-px bg-[#d5d3d6]" />
        <button aria-label="채우기 색" className="mr-[3px] ml-1">
          <Icon box="0 0 12 13" className="h-[13px] w-3 text-[#444]">
            <path d="M2 5.5L6 1.5l3.5 3.5L5.5 8.5z" />
            <path d="M10 5c1 1.5 1.2 2.5.3 3" stroke="#2b7cc0" />
            <path d="M0 10.5h12v2.5H0z" fill="#ffee00" stroke="none" />
          </Icon>
        </button>
        <Chevron />
        <button className="mx-1 w-[11px] border-b-[3px] border-[#fb0f0c] leading-[9px] font-bold">가</button>
        <Chevron />
        <span className="ml-[3px] h-3.5 w-px bg-[#d5d3d6]" />
        <button className="mx-0.5 flex w-3 flex-col text-[6px] leading-[6px] text-[#555]">
          <span>내천</span>
          <span className="text-right text-[#2b7cc0]">개</span>
        </button>
        <Chevron />
      </div>
    </div>
  );
}

function AlignGroup() {
  return (
    <div className="flex flex-col gap-px pt-[3px] pl-[5px]">
      <div className="flex h-[15px] items-center">
        <button aria-label="위쪽 맞춤" className="flex w-[15px] justify-center pb-1"><Lines widths={[10, 6, 10]} indent="center" /></button>
        <button aria-label="가운데 맞춤" className="flex w-[15px] justify-center pb-px"><Lines widths={[10, 6, 10]} indent="center" /></button>
        <button aria-label="아래쪽 맞춤" className="flex h-[15px] w-[15px] justify-center bg-[#c9c7ca] pt-1"><Lines widths={[10, 6, 10]} indent="center" /></button>
        <button aria-label="텍스트 줄 바꿈" className="ml-1">
          <Icon box="0 0 12 12" className="size-3 text-[#444]">
            <text x="0" y="5.5" fontSize="6" fill="currentColor" stroke="none">가나</text>
            <text x="0" y="11" fontSize="6" fill="currentColor" stroke="none">다</text>
            <path d="M11 6v2.5H6.5M8 7L6.5 8.5 8 10" stroke="#2b7cc0" />
          </Icon>
        </button>
      </div>
      <div className="flex h-[15px] items-center">
        <button aria-label="왼쪽" className="flex w-[15px] justify-center"><Lines widths={[10, 7, 10, 7]} indent="left" /></button>
        <button aria-label="가운데" className="flex w-[15px] justify-center"><Lines widths={[10, 7, 10, 7]} indent="center" /></button>
        <button aria-label="오른쪽" className="flex w-[15px] justify-center"><Lines widths={[10, 7, 10, 7]} indent="right" /></button>
        <button aria-label="병합" className="mr-1 ml-[3px]">
          <Icon box="0 0 12 10" className="h-2.5 w-3 text-[#555]">
            <path d="M.5.5h11v9H.5zM6 .5v2M6 7.5v2M.5 2.5h11M.5 7.5h11" />
            <path d="M1 3h10v4H1z" fill="#bfe0f5" stroke="none" />
            <path d="M2 5h8M3.5 3.7L2 5l1.5 1.3M8.5 3.7L10 5 8.5 6.3" stroke="#2b7cc0" />
          </Icon>
        </button>
        <Chevron />
      </div>
      <div className="flex h-[15px] items-center">
        {["M5 5H.5M2.5 3L.5 5l2 2", "M0 5h4.5M2.5 3l2 2-2 2"].map((d) => (
          <button key={d} aria-label="들여쓰기" className="flex w-[15px] justify-center">
            <Icon box="0 0 10 10" className="size-2.5 text-[#555]">
              <path d="M0 1h10M6 3.7h4M6 6.3h4M0 9h10" strokeWidth="0.9" />
              <path d={d} stroke="#2b7cc0" />
            </Icon>
          </button>
        ))}
        {vline}
        <button aria-label="방향" className="mr-1">
          <Icon box="0 0 11 11" className="size-[11px] text-[#444]">
            <path d="M1 5l3-3M2 7l4-4M1.5 3.5l3 3" strokeWidth="0.8" />
            <path d="M2.5 10.5l7-7M6.5 3h3.5v3.5" stroke="#2b7cc0" />
          </Icon>
        </button>
        <Chevron />
      </div>
    </div>
  );
}

function NumberGroup() {
  return (
    <div className="flex flex-col gap-1 pt-[3px] pl-[5px]">
      <select aria-label="표시 형식" className="h-[15px] w-[58px] appearance-none border border-[#c4c2c5] bg-white pl-0.5">
        <option>일반</option>
      </select>
      <div className="flex h-3 items-center gap-1 pl-0.5">
        <Icon box="0 0 12 10" className="h-2.5 w-3 text-[#555]">
          <path d="M.5 1.5h11v5H.5z" />
          <path d="M3 3v2M8 3v2" />
          <path d="M6 5h5v5H6z" fill="#f4b55f" stroke="#cf8523" />
        </Icon>
        <Chevron />
        <span>%</span>
      </div>
      <div className="flex h-3 items-center gap-1 pl-0.5">
        {["M4 2.5H0M1.5 1L0 2.5 1.5 4", "M0 8h4M2.5 6.5L4 8 2.5 9.5"].map((d, i) => (
          <Icon key={d} box="0 0 11 11" className="size-[11px] text-[#444]">
            <text x={i ? 2 : 5} y="5" fontSize="5" fill="currentColor" stroke="none">{i ? ".00" : ".0"}</text>
            <text x={i ? 5 : 2} y="10.5" fontSize="5" fill="currentColor" stroke="none">{i ? ".0" : ".00"}</text>
            <path d={d} stroke="#2b7cc0" />
          </Icon>
        ))}
      </div>
    </div>
  );
}

function SheetRibbon() {
  return (
    <div className="flex h-[65px] shrink-0 border-b border-[#d2d0d3] text-[8px] text-[#444]">
      <SheetGroup label="클립보드" width="w-[70px]" launcher>
        <div className="flex pt-[5px] pl-1.5">
          <button className="flex w-8 flex-col items-center gap-1 whitespace-nowrap">
            <Icon box="0 0 20 21" className="h-[21px] w-5">
              <path d="M6 2.5H1.5v16H9M12 2.5h3V6" stroke="#e0a040" strokeWidth="1.5" />
              <path d="M4.5 4.5v-2h2c.5-2 3.5-2 4 0h2v2z" fill="#fff" stroke="#666" strokeWidth="0.9" />
              <path d="M9.5 8h8.5v12H9.5z" fill="#fff" stroke="#666" />
            </Icon>
            <span className="leading-[9px]">붙여넣기</span>
            <Chevron />
          </button>
          <div className="flex flex-col gap-1 pl-1">
            <Icon box="0 0 10 12" className="h-3 w-2.5 text-[#444]">
              <path d="M2.5 0l4 8M7.5 0l-4 8" />
              <circle cx="2.5" cy="9.5" r="1.6" stroke="#2b7cc0" />
              <circle cx="7.5" cy="9.5" r="1.6" stroke="#2b7cc0" />
            </Icon>
            <div className="flex items-center gap-1">
              <Icon box="0 0 11 12" className="h-3 w-[11px] text-[#555]"><path d="M4 9.5H.6V.8h4L6 2M4 3h3.5l3 3v5.5H4zM6 7h2.5M6 9h2.5" /></Icon>
              <Chevron />
            </div>
            <Icon box="0 0 11 12" className="h-3 w-[11px]">
              <path d="M1 6l4-2 3 3-2.5 4.5C3.5 10.5 1.5 8.5 1 6z" fill="#f0a54c" stroke="#d98323" />
              <path d="M5 3.5L8.5 7M7 5.5l3-4" stroke="#444" strokeWidth="1.3" />
            </Icon>
          </div>
        </div>
      </SheetGroup>
      <Rule />
      <SheetGroup label="글꼴" width="w-[181px]" launcher><FontGroup /></SheetGroup>
      <Rule />
      <SheetGroup label="맞춤" width="w-[81px]" launcher><AlignGroup /></SheetGroup>
      <Rule />
      <SheetGroup label="표시 형식" width="w-[63px]" launcher><NumberGroup /></SheetGroup>
      <Rule />
      <SheetGroup label="스타일" width="w-20" />
      <Rule />
      <SheetGroup label="셀" width="w-14" />
      <Rule />
      <SheetGroup label="편집" width="w-[59px]" />
      <Rule />
      <div className="flex flex-1 items-end justify-end pr-1.5 pb-[3px]">
        <Icon box="0 0 7 4" className="h-1 w-[7px] text-[#444]"><path d="M.5 3.5l3-3 3 3" /></Icon>
      </div>
    </div>
  );
}

function FormulaBar() {
  return (
    <div className="flex h-[33px] shrink-0 items-center pr-[3px] pl-[3px] text-[8px] text-[#444]">
      <div className="flex h-[18px] w-[68px] items-center border border-[#cfcdd0] bg-white pr-1">
        <input aria-label="이름 상자" defaultValue="J7" className="w-10 flex-1 pl-1 text-[9px]" />
        <Caret />
      </div>
      <span className="w-5 text-center text-[#999]">⋮</span>
      <div className="flex h-[18px] w-[73px] items-center justify-around border border-[#cfcdd0] bg-white px-px">
        <Icon box="0 0 8 8" className="size-2 text-[#bbb]"><path d="M1 1l6 6M7 1L1 7" /></Icon>
        <Icon box="0 0 9 8" className="h-2 w-[9px] text-[#bbb]"><path d="M.7 4.5L3.2 7l5-6" strokeWidth="1.3" /></Icon>
        <span className="font-['Liberation_Serif',serif] text-[10px] font-bold italic">fx</span>
      </div>
      <div className="ml-0.5 flex h-[18px] flex-1 items-center border border-[#cfcdd0] bg-white pr-0.5">
        <input aria-label="수식 입력줄" className="flex-1" />
        <Chevron />
      </div>
    </div>
  );
}

function Sheet() {
  return (
    <div className="min-h-0 flex-1 overflow-hidden">
      <table className="w-[643px] table-fixed border-separate border-spacing-0 bg-white font-['Noto_Sans_CJK_KR',sans-serif] text-[10px] leading-[14px] text-[#262626]">
        <colgroup>
          <col className="w-[19px]" />
          {COLUMNS.map((c) => <col key={c} className="w-12" />)}
        </colgroup>
        <thead>
          <tr className="h-3.5">
            <th className="border-r border-b border-[#a6a4a7] bg-[#e8e6e9] p-0">
              <Icon box="0 0 10 10" className="ml-[7px] size-2.5"><path d="M10 0v10H0z" fill="#b4b2b5" stroke="none" /></Icon>
            </th>
            {COLUMNS.map((c) => (
              <th
                key={c}
                scope="col"
                className={`border-r p-0 align-top leading-[13px] font-normal ${c === "J" ? "border-b border-r-[#bfbdc0] border-b-[#1d6b43] bg-[#d2d0d3] text-[#1d6b43]" : "border-b border-r-[#c6c4c7] border-b-[#a6a4a7] bg-[#e8e6e9]"}`}
              >
                {c}
              </th>
            ))}
          </tr>
        </thead>
        <tbody>
          {Array.from({ length: 37 }, (_, r) => {
            const part = PARTS[r - 1];
            const cells = r === 0 ? SHEET_HEADERS : part ? [String(r), ...part] : [];
            return (
              <tr key={r} className={r % 3 === 2 ? "h-3.5" : "h-[15px]"}>
                <th
                  scope="row"
                  className={`border-r border-b p-0 align-top leading-[13px] font-normal ${r === 6 ? "border-r-[#1d6b43] border-b-[#c6c4c7] bg-[#d2d0d3] text-[#1d6b43]" : "border-r-[#a6a4a7] border-b-[#cfcdd0] bg-[#e8e6e9]"}`}
                >
                  {r < 36 && r + 1}
                </th>
                {COLUMNS.map((c, i) => {
                  const isText = r === 0 || c === "B" || c === "D";
                  if (r === 6 && c === "J") {
                    return <td key={c} className="border-r border-b border-[#1d6b43] p-0 outline outline-[#1d6b43]" />;
                  }
                  return (
                    <td
                      key={c}
                      className={`border-r border-b border-[#dcdadc] p-0 align-top leading-[13px] whitespace-nowrap ${isText ? "pl-px text-left" : "pr-px text-right"}`}
                    >
                      {cells[i]}
                    </td>
                  );
                })}
              </tr>
            );
          })}
        </tbody>
      </table>
    </div>
  );
}

function Arrow({ d }: { d: string }) {
  return (
    <button aria-label="스크롤" className="flex size-2.5 shrink-0 items-center justify-center border border-[#bdbbbe] bg-white">
      <Icon box="0 0 5 5" className="size-[5px] text-[#555]"><path d={d} fill="currentColor" stroke="none" /></Icon>
    </button>
  );
}

function SheetTabs() {
  return (
    <div className="flex h-[19px] shrink-0 items-start border-t border-[#a6a4a7] bg-[#e6e4e7] text-[8px]">
      <div className="flex h-[17px] w-[67px] items-center gap-4 pl-[17px] text-[#b9b7ba]">
        <Icon box="0 0 4 5" className="h-[5px] w-1"><path d="M3.5.5v4L.5 2.5z" fill="currentColor" stroke="none" /></Icon>
        <Icon box="0 0 4 5" className="h-[5px] w-1"><path d="M.5.5v4l3-2z" fill="currentColor" stroke="none" /></Icon>
      </div>
      <button className="h-[17px] w-11 border-b-2 border-[#1d8a55] bg-white text-[8px] leading-[15px] text-[#217346]">Sheet1</button>
      <button aria-label="새 시트" className="ml-[21px] flex h-[17px] items-center">
        <Icon box="0 0 12 12" className="size-3 text-[#666]"><circle cx="6" cy="6" r="5" /><path d="M6 3.2v5.6M3.2 6h5.6" /></Icon>
      </button>
      <div className="flex h-[17px] flex-1 items-center justify-end pr-3.5">
        <span className="mr-2 text-[#999]">⋮</span>
        <Arrow d="M4 0v5L1 2.5z" />
        <span className="h-2.5 w-[192px] border border-[#bdbbbe] bg-white" />
        <span className="w-[18px]" />
        <Arrow d="M1 0v5l3-2.5z" />
      </div>
    </div>
  );
}

function SheetStatus() {
  return (
    <footer className="flex h-[14px] shrink-0 items-center justify-end pr-3 text-[8px] text-[#555]">
      <button aria-label="기본" className="flex h-full w-[27px] items-center justify-center bg-[#c9c7ca]">
        <Icon box="0 0 9 9" className="size-[9px] text-[#333]"><path d="M.5.5h8v8h-8zM.5 3.2h8M.5 5.8h8M3.2.5v8M5.8.5v8" /></Icon>
      </button>
      <button aria-label="페이지 레이아웃" className="flex w-[27px] justify-center">
        <Icon box="0 0 10 9" className="h-[9px] w-2.5 text-[#555]"><path d="M.5.5h9v8h-9zM2.5 2.5h5v4h-5zM4 4h2M4 5.5h2" strokeWidth="0.9" /></Icon>
      </button>
      <button aria-label="페이지 나누기" className="flex w-[27px] justify-center">
        <Icon box="0 0 10 9" className="h-[9px] w-2.5 text-[#555]"><path d="M.5.5h9v8h-9zM3.5.5v5M6.5.5v5M.5 5.5h6" strokeWidth="0.9" /></Icon>
      </button>
      <button aria-label="축소" className="mx-[3px] text-[10px] leading-3">−</button>
      <input
        type="range"
        aria-label="확대/축소"
        defaultValue={50}
        className="h-px w-[67px] appearance-none bg-[#aaa] [&::-webkit-slider-thumb]:h-[7px] [&::-webkit-slider-thumb]:w-[3px] [&::-webkit-slider-thumb]:appearance-none [&::-webkit-slider-thumb]:bg-[#666]"
      />
      <button aria-label="확대" className="mx-[3px] text-[10px] leading-3">+</button>
      <span className="ml-1 text-[9px]">100%</span>
    </footer>
  );
}

function MoveCursor() {
  return (
    <Icon box="0 0 16 20" className="h-5 w-4 text-black">
      <path d="M7 2v12M1 8h12" strokeWidth="1.2" />
      <path d="M7 0l2.2 3H4.8zM7 16l2.2-3H4.8zM0 8l3-2.2v4.4zM14 8l-3-2.2v4.4z" fill="currentColor" stroke="none" />
      <path d="M7 8v9l2.2-2 1.5 3.3 1.5-.7-1.5-3.2h3z" fill="#fff" strokeWidth="0.8" />
    </Icon>
  );
}

function Spreadsheet() {
  return (
    <div className="relative flex w-1/2 flex-col overflow-hidden border border-t-0 border-[#2f6f52] bg-[#f5f3f6]">
      <SheetTitle />
      <SheetMenu />
      <SheetRibbon />
      <div className="flex min-h-0 flex-1 flex-col bg-[#e6e4e7]">
        <FormulaBar />
        <div className="flex min-h-0 flex-1">
          <Sheet />
          <div className="flex w-3.5 flex-col items-center border-l border-[#c6c4c7] bg-[#e1dfe2] pt-px">
            <Arrow d="M0 4h5L2.5 1z" />
            <div className="h-[30px] w-2.5 border border-[#bdbbbe] bg-white" />
            <div className="flex-1" />
            <Arrow d="M0 1h5L2.5 4z" />
          </div>
        </div>
      </div>
      <SheetTabs />
      <SheetStatus />
      <button className="absolute top-[671px] left-[405px] flex h-[15px] w-[41px] items-center gap-0.5 border border-[#c4c2c5] bg-white pl-0.5 text-[8px] text-[#555]">
        <Icon box="0 0 10 11" className="h-[11px] w-2.5">
          <path d="M.5 2h7v8.5h-7z" fill="#eeb96b" stroke="none" />
          <path d="M2.5 1h3v2h-3z" fill="#777" stroke="none" />
          <path d="M5 5h2.5L9.5 7v3.5H5z" fill="#fff" stroke="#666" strokeWidth="0.8" />
        </Icon>
        (Ctrl)
        <Caret />
      </button>
      <div className="absolute top-[239px] left-[488px]"><MoveCursor /></div>
    </div>
  );
}

export default function App() {
  return (
    <div className="relative flex h-screen overflow-hidden font-['Noto_Sans','Noto_Sans_CJK_KR',sans-serif]">
      <BoardViewer />
      <Spreadsheet />
      <div className="absolute top-2 right-2.5 flex h-20 w-[259px] items-center gap-2.5 rounded-md border-[3px] border-[#4fe9e6] bg-white pl-2.5 shadow">
        <DocumentsIcon className="h-[60px] w-[58px]" />
        <span className="text-[29px] leading-9 font-medium text-black">Documents</span>
      </div>
    </div>
  );
}
